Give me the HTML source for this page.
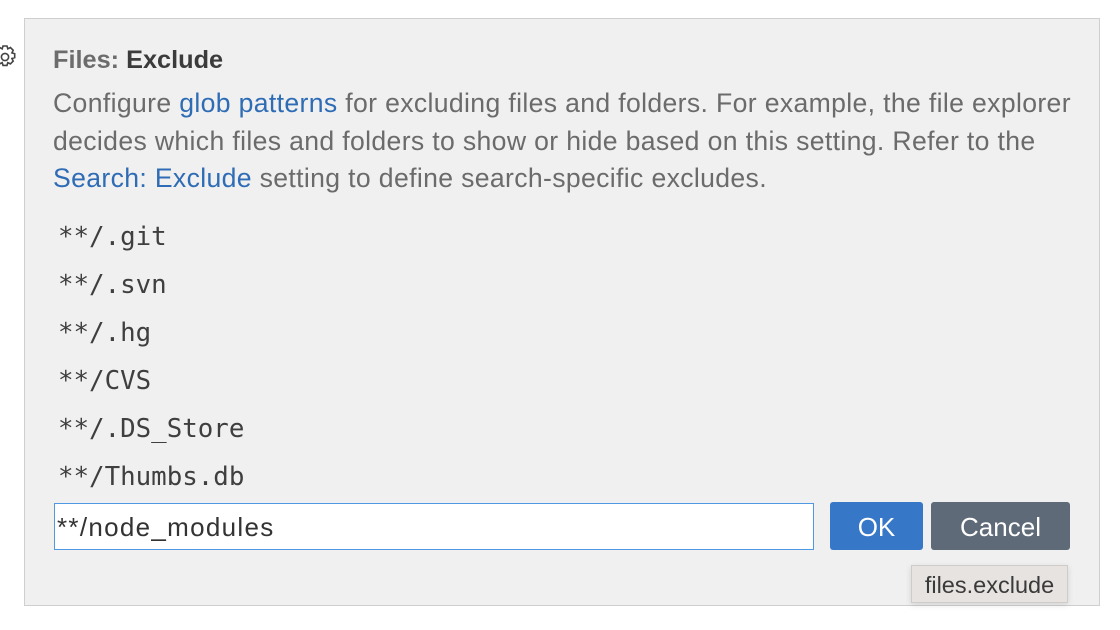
<!DOCTYPE html>
<html><head><style>
body{margin:0;width:1120px;height:630px;background:#fff;position:relative;overflow:hidden;font-family:"Liberation Sans",sans-serif}
.panel{position:absolute;left:24px;top:18px;width:1076px;height:588px;background:#f0f0f0;border:1px solid #cfcfcf;box-sizing:border-box}
.t{position:absolute;left:53px;top:46px;font-size:25.3px;color:#6c6c6c;font-weight:bold}
.t b{color:#3b3b3b}
.d{position:absolute;left:53px;top:85px;width:1060px;font-size:26.6px;line-height:37.5px;color:#6b6b6b;letter-spacing:0.35px;white-space:nowrap}
.d a{color:#2e6cb5;text-decoration:none}
.m{position:absolute;left:58px;font-family:"DejaVu Sans Mono","Liberation Mono",monospace;font-size:25.8px;color:#3f3f3f}
.inp{position:absolute;left:54px;top:503px;width:760px;height:47px;border:1px solid #4e98e4;background:#fff;box-sizing:border-box;font-size:26px;color:#333;padding:8px 0 0 2px;letter-spacing:1.3px}
.btn{position:absolute;top:502px;height:48px;border-radius:3px;color:#fff;font-size:26px;text-align:center;line-height:50px}
.tip{position:absolute;left:911px;top:565px;width:157px;height:38px;background:#e6e3e1;border:1px solid #cfcbc8;box-sizing:border-box;font-size:23.5px;color:#3a3a3a;text-align:center;line-height:38px;box-shadow:0 2px 6px rgba(0,0,0,.12)}
</style></head><body>
<svg style="position:absolute;left:-8px;top:44px" width="26" height="26" viewBox="0 0 26 26"><g fill="none" stroke="#444" stroke-width="1.6" transform="translate(13 13)"><circle r="3.6"/><path d="M-2 -11h4l.8 2.8 2.6-1.3 2.8 2.8-1.3 2.6 2.8.8v4l-2.8.8 1.3 2.6-2.8 2.8-2.6-1.3-.8 2.8h-4l-.8-2.8-2.6 1.3-2.8-2.8 1.3-2.6-2.8-.8v-4l2.8-.8-1.3-2.6 2.8-2.8 2.6 1.3z"/></g></svg>
<div class="panel"></div>
<div class="t">Files: <b>Exclude</b></div>
<div class="d">Configure <a>glob patterns</a> for excluding files and folders. For example, the file explorer<br>decides which files and folders to show or hide based on this setting. Refer to the<br><a>Search: Exclude</a> setting to define search-specific excludes.</div>
<div class="m" style="top:222px">**/.git</div>
<div class="m" style="top:270px">**/.svn</div>
<div class="m" style="top:318px">**/.hg</div>
<div class="m" style="top:366px">**/CVS</div>
<div class="m" style="top:414px">**/.DS_Store</div>
<div class="m" style="top:462px">**/Thumbs.db</div>
<div class="inp">**/node_modules</div>
<div class="btn" style="left:830px;width:93px;background:#3677c7">OK</div>
<div class="btn" style="left:931px;width:139px;background:#5f6a79">Cancel</div>
<div class="tip">files.exclude</div>
</body></html>
